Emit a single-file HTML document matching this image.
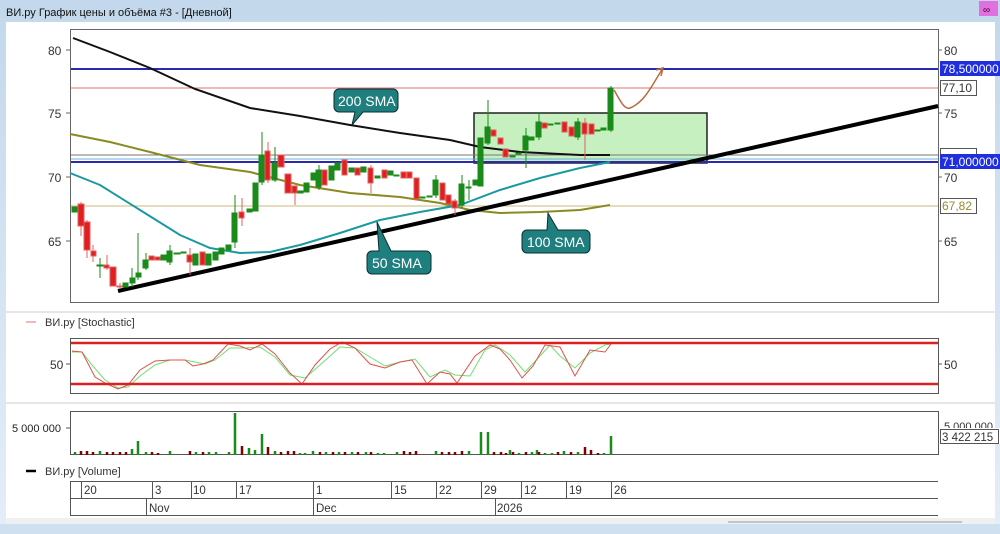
<!DOCTYPE html>
<html><head><meta charset="utf-8"><style>
html,body{margin:0;padding:0;width:1000px;height:534px;overflow:hidden;background:#cfe0f0;font-family:"Liberation Sans","DejaVu Sans",sans-serif;}
svg{position:absolute;left:0;top:0}
</style></head><body>
<svg width="1000" height="534" viewBox="0 0 1000 534" xmlns="http://www.w3.org/2000/svg" font-family="Liberation Sans, DejaVu Sans, sans-serif">
<defs><linearGradient id="tb" x1="0" y1="0" x2="0" y2="1"><stop offset="0" stop-color="#c3d8ec"/><stop offset="1" stop-color="#e4eef8"/></linearGradient></defs>
<rect x="0" y="0" width="1000" height="534" fill="url(#tb)"/>
<text x="6" y="16" font-size="11" fill="#111">ВИ.ру График цены и объёма #3 - [Дневной]</text>
<rect x="979" y="1" width="19" height="15" fill="#e070e0"/>
<text x="983" y="13" font-size="10" fill="#402">∞</text>
<rect x="6" y="22" width="989" height="498" fill="#fff"/>
<rect x="6" y="518" width="989" height="6" fill="#f0f0f0"/>
<line x1="728" y1="522" x2="962" y2="522" stroke="#999"/>
<rect x="0" y="524" width="1000" height="10" fill="#cfe0f0"/>
<!-- main panel -->
<rect x="70.5" y="29.5" width="868" height="273" fill="#fff" stroke="#666"/>
<g stroke="#666">
<line x1="66" y1="50" x2="70" y2="50"/><line x1="66" y1="113" x2="70" y2="113"/><line x1="66" y1="177" x2="70" y2="177"/><line x1="66" y1="241" x2="70" y2="241"/>
<line x1="938" y1="50" x2="942" y2="50"/><line x1="938" y1="113" x2="942" y2="113"/><line x1="938" y1="177" x2="942" y2="177"/><line x1="938" y1="241" x2="942" y2="241"/>
</g>
<g font-size="12" fill="#333"><text x="48" y="55">80</text><text x="48" y="118">75</text><text x="48" y="182">70</text><text x="48" y="246">65</text>
<text x="944" y="55">80</text><text x="944" y="118">75</text><text x="944" y="182">70</text><text x="944" y="246">65</text></g>
<!-- green box -->
<rect x="474" y="113" width="233" height="50" fill="#c6f0c0" stroke="#222" stroke-width="1.5"/>
<!-- horizontal lines -->
<line x1="71" y1="69" x2="938" y2="69" stroke="#2a2ab0" stroke-width="2"/>
<line x1="71" y1="88" x2="938" y2="88" stroke="#e07070"/>
<line x1="71" y1="155" x2="938" y2="155" stroke="#777"/>
<line x1="71" y1="159" x2="938" y2="159" stroke="#6ab0d8"/>
<line x1="71" y1="162" x2="938" y2="162" stroke="#2a2ab0" stroke-width="2"/>
<line x1="71" y1="206" x2="938" y2="206" stroke="#c8b878"/>
<rect x="940" y="61" width="60" height="15" fill="#1f2fe0"/><text x="942" y="73" font-size="12" fill="#fff">78,500000</text>
<rect x="940.5" y="80.5" width="36" height="15" fill="#fff" stroke="#555"/><text x="942" y="92" font-size="12" fill="#333">77,10</text>
<rect x="940.5" y="148.5" width="36" height="6" fill="#fff" stroke="#555"/>
<rect x="940" y="154" width="60" height="15" fill="#1f2fe0"/><text x="942" y="166" font-size="12" fill="#fff">71,000000</text>
<rect x="940.5" y="198.5" width="36" height="15" fill="#fff" stroke="#555"/><text x="942" y="210" font-size="12" fill="#998830">67,82</text>
<!-- SMAs -->
<polyline fill="none" stroke="#111" stroke-width="2" points="73,38 110,52 150,68 195,89 250,108 300,116 350,125 400,133 450,140 480,147 520,152 580,155 610,155"/>
<polyline fill="none" stroke="#8a8a20" stroke-width="2" points="70,134 110,142 150,152 200,165 250,172 300,185 350,193 400,197 440,203 470,210 500,213 540,212 580,210 610,205"/>
<polyline fill="none" stroke="#1a9aa0" stroke-width="2" points="70,173 100,185 140,210 180,235 210,248 240,253 270,252 300,245 340,233 380,220 420,212 460,205 500,190 540,178 580,168 610,162"/>
<line x1="118" y1="291" x2="938" y2="106" stroke="#000" stroke-width="4"/>
<!-- candles -->
<g stroke-width="1">
<g fill="#1a8a1a" stroke="#1a8a1a">
<rect x="72" y="207" width="5" height="5"/>
<line x1="100" y1="258" x2="100" y2="278"/><rect x="97" y="265" width="6" height="1"/>
<rect x="123" y="283" width="5" height="4"/>
<line x1="132" y1="268" x2="132" y2="287"/><rect x="130" y="278" width="5" height="5"/>
<line x1="138" y1="233" x2="138" y2="280"/><rect x="136" y="273" width="5" height="4"/>
<line x1="146" y1="253" x2="146" y2="270"/><rect x="143" y="260" width="5" height="8"/>
<rect x="161" y="255" width="5" height="5"/>
<line x1="170" y1="245" x2="170" y2="265"/><rect x="167" y="251" width="5" height="11"/>
<rect x="174" y="253" width="6" height="1"/><rect x="181" y="252" width="5" height="1"/>
<rect x="193" y="254" width="5" height="11"/><rect x="206" y="254" width="5" height="11"/>
<rect x="213" y="252" width="5" height="8"/><rect x="219" y="248" width="5" height="6"/><rect x="226" y="245" width="5" height="5"/>
<line x1="235" y1="195" x2="235" y2="248"/><rect x="232" y="213" width="5" height="29"/>
<rect x="247" y="209" width="5" height="3"/>
<rect x="253" y="183" width="5" height="28"/>
<line x1="262" y1="132" x2="262" y2="185"/><rect x="259" y="155" width="5" height="27"/>
<line x1="275" y1="147" x2="275" y2="182"/><rect x="272" y="163" width="5" height="17"/>
<rect x="298" y="191" width="5" height="2"/><rect x="304" y="183" width="5" height="9"/><rect x="311" y="173" width="5" height="7"/>
<line x1="319" y1="165" x2="319" y2="190"/><rect x="316" y="170" width="5" height="17"/>
<rect x="329" y="166" width="5" height="14"/><rect x="335" y="163" width="5" height="7"/><rect x="349" y="168" width="5" height="4"/><rect x="361" y="167" width="5" height="5"/>
<rect x="375" y="176" width="5" height="2"/><rect x="388" y="171" width="5" height="4"/><rect x="394" y="175" width="5" height="1"/>
<rect x="420" y="197" width="5" height="1"/><rect x="427" y="196" width="5" height="1"/>
<line x1="436" y1="175" x2="436" y2="198"/><rect x="433" y="180" width="5" height="15"/>
<line x1="462" y1="175" x2="462" y2="208"/><rect x="459" y="184" width="5" height="21"/>
<line x1="469" y1="180" x2="469" y2="200"/><rect x="466" y="187" width="5" height="1"/>
<rect x="473" y="180" width="5" height="5"/>
<rect x="478" y="138" width="5" height="48"/>
<line x1="488" y1="100" x2="488" y2="145"/><rect x="485" y="127" width="5" height="16"/>
<rect x="510" y="156" width="5" height="1"/><rect x="516" y="153" width="5" height="1"/>
<line x1="526" y1="128" x2="526" y2="168"/><rect x="523" y="136" width="5" height="14"/>
<rect x="529" y="137" width="5" height="3"/>
<line x1="539" y1="112" x2="539" y2="140"/><rect x="536" y="122" width="5" height="15"/>
<rect x="548" y="124" width="5" height="1"/><rect x="555" y="123" width="5" height="1"/>
<line x1="578" y1="118" x2="578" y2="140"/><rect x="575" y="122" width="5" height="15"/>
<rect x="595" y="130" width="5" height="1"/><rect x="601" y="128" width="5" height="2"/>
<line x1="611" y1="86" x2="611" y2="132"/><rect x="608" y="88" width="5" height="42"/>
</g>
<g fill="#e02020" stroke="#e06060">
<line x1="81" y1="202" x2="81" y2="236"/><rect x="78" y="204" width="6" height="22"/>
<line x1="87" y1="220" x2="87" y2="258"/><rect x="84" y="222" width="6" height="28"/>
<line x1="93" y1="245" x2="93" y2="262"/><rect x="91" y="251" width="5" height="5"/>
<line x1="107" y1="255" x2="107" y2="270"/><rect x="104" y="265" width="5" height="3"/>
<rect x="110" y="267" width="6" height="19"/>
<line x1="120" y1="283" x2="120" y2="289"/><rect x="117" y="286" width="5" height="1"/>
<rect x="149" y="256" width="5" height="4"/><rect x="155" y="257" width="5" height="3"/>
<line x1="190" y1="248" x2="190" y2="275"/><rect x="187" y="255" width="5" height="7"/>
<rect x="200" y="252" width="5" height="13"/>
<line x1="242" y1="198" x2="242" y2="226"/><rect x="239" y="212" width="5" height="6"/>
<line x1="268" y1="142" x2="268" y2="183"/><rect x="265" y="151" width="5" height="29"/>
<rect x="278" y="155" width="6" height="12"/><rect x="285" y="174" width="6" height="19"/>
<line x1="295" y1="186" x2="295" y2="205"/><rect x="292" y="186" width="5" height="7"/>
<rect x="322" y="170" width="5" height="15"/><rect x="342" y="160" width="5" height="15"/><rect x="355" y="168" width="5" height="7"/>
<line x1="371" y1="165" x2="371" y2="193"/><rect x="368" y="168" width="5" height="15"/>
<rect x="382" y="170" width="5" height="8"/><rect x="401" y="172" width="5" height="6"/><rect x="407" y="172" width="5" height="6"/>
<rect x="414" y="178" width="5" height="21"/>
<rect x="440" y="183" width="5" height="17"/><rect x="446" y="195" width="5" height="9"/>
<line x1="455" y1="199" x2="455" y2="215"/><rect x="452" y="201" width="5" height="7"/>
<rect x="491" y="130" width="5" height="6"/><rect x="498" y="138" width="5" height="6"/><rect x="503" y="149" width="5" height="8"/>
<rect x="542" y="123" width="5" height="5"/><rect x="562" y="122" width="5" height="10"/><rect x="569" y="127" width="5" height="9"/>
<line x1="585" y1="118" x2="585" y2="160"/><rect x="582" y="123" width="5" height="11"/>
<rect x="589" y="124" width="5" height="10"/>
</g>
</g>
<!-- arrow -->
<path d="M614,90 C620,100 624,110 630,108 C645,102 652,85 663,68" fill="none" stroke="#b86a40" stroke-width="1.5"/>
<path d="M656,70 L663,68 L661,76" fill="none" stroke="#b86a40" stroke-width="1.5"/>
<!-- callouts -->
<g fill="#1f7e7e" stroke="#0a3030" stroke-width="1">
<path d="M339,89 h54 a5,5 0 0 1 5,5 v13 a5,5 0 0 1 -5,5 h-30 l-11,13 l3,-13 h-16 a5,5 0 0 1 -5,-5 v-13 a5,5 0 0 1 5,-5z"/>
<path d="M372,251 h7 l-2,-29 l14,29 h35 a5,5 0 0 1 5,5 v13 a5,5 0 0 1 -5,5 h-54 a5,5 0 0 1 -5,-5 v-13 a5,5 0 0 1 5,-5z"/>
<path d="M527,230 h20 l1,-17 l10,17 h27 a5,5 0 0 1 5,5 v13 a5,5 0 0 1 -5,5 h-58 a5,5 0 0 1 -5,-5 v-13 a5,5 0 0 1 5,-5z"/>
</g>
<g font-size="14" fill="#fff"><text x="338" y="106">200 SMA</text><text x="372" y="268">50 SMA</text><text x="527" y="247">100 SMA</text></g>
<!-- separators -->
<line x1="6" y1="312" x2="995" y2="312" stroke="#ccc"/>
<line x1="6" y1="403" x2="995" y2="403" stroke="#ccc"/>
<!-- stochastic -->
<line x1="26" y1="322" x2="36" y2="322" stroke="#e07070"/>
<text x="45" y="326" font-size="11" fill="#333">ВИ.ру [Stochastic]</text>
<rect x="70.5" y="338.5" width="868" height="55" fill="#fff" stroke="#555"/>
<line x1="66" y1="364" x2="70" y2="364" stroke="#555"/><line x1="938" y1="364" x2="942" y2="364" stroke="#555"/>
<text x="50" y="369" font-size="12" fill="#333">50</text><text x="944" y="369" font-size="12" fill="#333">50</text>
<polyline fill="none" stroke="#70e070" points="72,352 82,352 92,365 105,380 118,388 128,387 140,376 155,365 170,360 185,360 195,362 205,364 215,360 230,348 245,348 260,347 275,357 290,375 305,378 320,365 340,347 355,348 370,357 385,366 400,362 415,359 430,377 445,370 455,375 470,376 485,350 495,345 510,355 525,372 540,356 550,345 560,356 575,368 590,353 605,345 611,344"/>
<polyline fill="none" stroke="#e05050" points="72,351 82,352 95,377 105,383 118,389 128,385 140,370 155,361 170,360 185,360 193,366 203,364 213,360 228,344 240,346 250,350 262,344 275,354 290,373 302,384 315,365 330,349 342,342 355,348 370,364 385,368 400,362 412,360 427,384 440,372 450,374 457,383 475,356 490,345 500,349 510,360 522,378 533,366 545,345 560,347 575,376 590,350 605,352 611,344"/>
<line x1="71" y1="343" x2="938" y2="343" stroke="#e02020" stroke-width="2.5"/>
<line x1="71" y1="384" x2="938" y2="384" stroke="#e02020" stroke-width="2.5"/>
<!-- volume -->
<rect x="70.5" y="411.5" width="868" height="43" fill="#fff" stroke="#555"/>
<line x1="66" y1="428" x2="70" y2="428" stroke="#555"/>
<text x="12" y="432" font-size="11" fill="#222">5 000 000</text>
<text x="944" y="430" font-size="11" fill="#333">5 000 000</text>
<rect x="940" y="428" width="60" height="16" fill="#fff"/>
<rect x="940.5" y="429.5" width="58" height="14" fill="#fff" stroke="#555"/><text x="942" y="441" font-size="11.5" fill="#333">3 422 215</text>
<g stroke-width="2.5">
<path stroke="#1a8a1a" d="M75,455v-3M100,455v-4M132,455v-6M138,455v-14M146,455v-3M170,455v-4M196,455v-3M209,455v-3M216,455v-3M229,455v-3M235,455v-42M249,455v-7M255,455v-5M262,455v-21M275,455v-4M300,455v-2M305,455v-2M313,455v-4M326,455v-3M339,455v-3M352,455v-3M366,455v-3M378,455v-2M384,455v-2M397,455v-3M436,455v-4M469,455v-4M481,455v-23M488,455v-23M510,455v-5M519,455v-2M532,455v-3M537,455v-5M545,455v-2M552,455v-2M564,455v-4M578,455v-3M604,455v-2M611,455v-19"/>
<path stroke="#800000" d="M81,455v-4M87,455v-4M93,455v-3M107,455v-3M113,455v-3M120,455v-3M126,455v-3M152,455v-3M158,455v-2M190,455v-4M203,455v-3M242,455v-9M268,455v-8M281,455v-3M288,455v-4M294,455v-4M320,455v-3M333,455v-3M345,455v-3M358,455v-3M371,455v-3M404,455v-4M410,455v-3M416,455v-4M442,455v-3M449,455v-3M455,455v-3M462,455v-4M494,455v-3M501,455v-3M506,455v-2M513,455v-3M526,455v-3M539,455v-3M558,455v-3M571,455v-3M585,455v-8M591,455v-5M598,455v-2"/>
</g>
<line x1="26" y1="471" x2="36" y2="471" stroke="#000" stroke-width="2.5"/>
<text x="45" y="475" font-size="11" fill="#333">ВИ.ру [Volume]</text>
<!-- date axis -->
<g stroke="#555" fill="none">
<line x1="70" y1="481.5" x2="938" y2="481.5"/><line x1="70" y1="498.5" x2="938" y2="498.5"/><line x1="70" y1="515.5" x2="938" y2="515.5"/>
<line x1="70.5" y1="481" x2="70.5" y2="516"/>
<path d="M81.5,481v17M152.5,481v17M191.5,481v17M236.5,481v17M313.5,481v17M391.5,481v17M436.5,481v17M481.5,481v17M521.5,481v17M566.5,481v17M611.5,481v17M146.5,498v17M313.5,498v17M495.5,498v17"/>
</g>
<g font-size="11.5" fill="#333">
<text x="84" y="494">20</text><text x="155" y="494">3</text><text x="193" y="494">10</text><text x="239" y="494">17</text><text x="316" y="494">1</text><text x="394" y="494">15</text><text x="439" y="494">22</text><text x="484" y="494">29</text><text x="524" y="494">12</text><text x="569" y="494">19</text><text x="614" y="494">26</text>
<text x="149" y="512">Nov</text><text x="316" y="512">Dec</text><text x="497" y="512">2026</text>
</g>
</svg>
</body></html>
